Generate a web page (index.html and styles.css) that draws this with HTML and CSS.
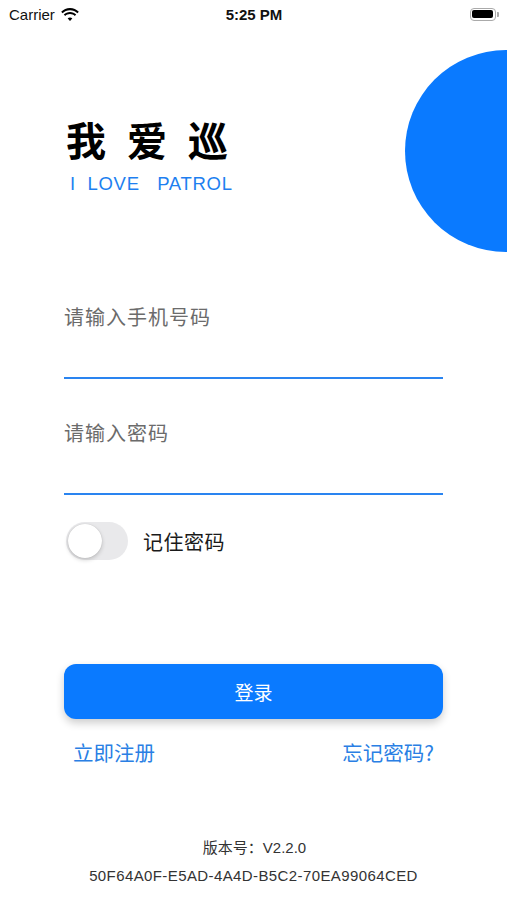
FILE: index.html
```html
<!DOCTYPE html>
<html lang="zh">
<head>
<meta charset="utf-8">
<title>我爱巡</title>
<link rel="stylesheet" href="styles.css">
</head>
<body>
<div class="screen">
  <div class="circle"></div>
  <div class="statusbar">
    <div class="sb-left">
      <span class="carrier">Carrier</span>
      <svg class="wifi" width="18" height="13" viewBox="0 0 18 13">
        <path d="M9 2.2c2.9 0 5.5 1.1 7.4 3l1.4-1.5C15.5 1.4 12.4 0 9 0S2.5 1.4.2 3.7l1.4 1.5C3.5 3.3 6.1 2.2 9 2.2z" fill="#000"/>
        <path d="M9 6c1.9 0 3.5.7 4.8 1.9l1.4-1.5C13.6 4.9 11.4 4 9 4S4.4 4.9 2.8 6.4l1.4 1.5C5.5 6.7 7.1 6 9 6z" fill="#000"/>
        <path d="M9 9.6c.9 0 1.7.3 2.3.9L9 13 6.7 10.5c.6-.6 1.4-.9 2.3-.9z" fill="#000"/>
      </svg>
    </div>
    <div class="sb-time">5:25 PM</div>
    <div class="sb-right">
      <div class="battery"><div class="battery-fill"></div></div>
      <div class="battery-nub"></div>
    </div>
  </div>

  <div class="brand">
    <h1 class="title"><span>我</span><span>爱</span><span>巡</span></h1>
    <div class="subtitle">I&nbsp;&nbsp;LOVE&nbsp;&nbsp;&nbsp;PATROL</div>
  </div>

  <div class="form">
    <div class="field field-first"><span class="placeholder">请输入手机号码</span></div>
    <div class="field"><span class="placeholder">请输入密码</span></div>
    <div class="remember">
      <div class="switch"><div class="knob"></div></div>
      <span class="remember-label">记住密码</span>
    </div>
    <button class="login">登录</button>
    <div class="links">
      <span class="link">立即注册</span>
      <span class="link">忘记密码?</span>
    </div>
  </div>

  <div class="footer">
    <div class="version">版本号：V2.2.0</div>
    <div class="uuid">50F64A0F-E5AD-4A4D-B5C2-70EA99064CED</div>
  </div>
</div>
</body>
</html>
```

FILE: styles.css
```css
* { box-sizing: border-box; }
html, body {
  margin: 0;
  padding: 0;
  background: #fff;
}
body {
  font-family: "Liberation Sans", "Noto Sans CJK SC", sans-serif;
  color: #222;
}
.screen {
  position: relative;
  width: 507px;
  height: 900px;
  overflow: hidden;
  background: #fff;
}
.circle {
  position: absolute;
  left: 405px;
  top: 50px;
  width: 202px;
  height: 202px;
  border-radius: 50%;
  background: #0a7aff;
}
.statusbar {
  height: 28px;
  display: flex;
  align-items: center;
  justify-content: space-between;
  padding: 0 8px 0 9px;
  font-size: 15px;
  position: relative;
}
.sb-left {
  display: flex;
  align-items: center;
  gap: 6px;
  width: 120px;
}
.carrier { color: #111; font-size: 15px; }
.sb-time {
  font-weight: bold;
  font-size: 15px;
  color: #111;
}
.sb-right {
  width: 120px;
  display: flex;
  align-items: center;
  justify-content: flex-end;
}
.battery {
  width: 26px;
  height: 13px;
  border: 1.5px solid #aaa;
  border-radius: 4px;
  padding: 1.5px;
}
.battery-fill {
  width: 100%;
  height: 100%;
  background: #000;
  border-radius: 2px;
}
.battery-nub {
  width: 2px;
  height: 5px;
  background: #aaa;
  border-radius: 0 1px 1px 0;
  margin-left: 1px;
}
.brand {
  padding-left: 66px;
  margin-top: 89px;
}
.title {
  margin: 0;
  font-family: "Noto Sans CJK SC", sans-serif;
  font-size: 40px;
  line-height: 44px;
  font-weight: 700;
  color: #000;
  display: flex;
  gap: 21px;
}
.subtitle {
  margin-top: 12px;
  padding-left: 4px;
  font-size: 18.5px;
  line-height: 22px;
  color: #1e7ff0;
  letter-spacing: 0.7px;
}
.form {
  margin: 108px 64px 0;
}
.field {
  height: 75.5px;
  margin-top: 40.5px;
  border-bottom: 2.5px solid #2a84f0;
}
.field-first {
  margin-top: 0;
}
.placeholder {
  display: block;
  font-family: "Noto Sans CJK SC", sans-serif;
  font-size: 20px;
  line-height: 28px;
  color: #6b6b6b;
  letter-spacing: 1px;
}
.remember {
  margin-top: 27.5px;
  display: flex;
  align-items: center;
  gap: 15px;
  padding-left: 2px;
}
.switch {
  width: 62px;
  height: 38px;
  border-radius: 19px;
  background: #e9e9eb;
  position: relative;
}
.knob {
  position: absolute;
  left: 2px;
  top: 2px;
  width: 34px;
  height: 34px;
  border-radius: 50%;
  background: #fff;
  box-shadow: 0 2px 4px rgba(0,0,0,0.18), 0 0 1px rgba(0,0,0,0.2);
}
.remember-label {
  font-family: "Noto Sans CJK SC", sans-serif;
  font-size: 20px;
  color: #1a1a1a;
  letter-spacing: 0.5px;
}
.login {
  display: block;
  width: 100%;
  height: 55px;
  margin-top: 104px;
  border: none;
  border-radius: 12px;
  background: #0a7aff;
  color: #fff;
  font-family: "Noto Sans CJK SC", sans-serif;
  font-size: 19px;
  box-shadow: 0 4px 8px rgba(0,0,0,0.2);
  padding: 0;
}
.links {
  display: flex;
  justify-content: space-between;
  padding: 0 9px;
  margin-top: 19px;
}
.link {
  font-family: "Noto Sans CJK SC", sans-serif;
  font-size: 20.5px;
  line-height: 28px;
  color: #2a7fe4;
}
.footer {
  margin-top: 72px;
  text-align: center;
  font-size: 15px;
  color: #333;
}
.version {
  line-height: 20px;
  padding-left: 2px;
}
.uuid {
  margin-top: 8px;
  line-height: 20px;
  letter-spacing: 0.4px;
}
```
